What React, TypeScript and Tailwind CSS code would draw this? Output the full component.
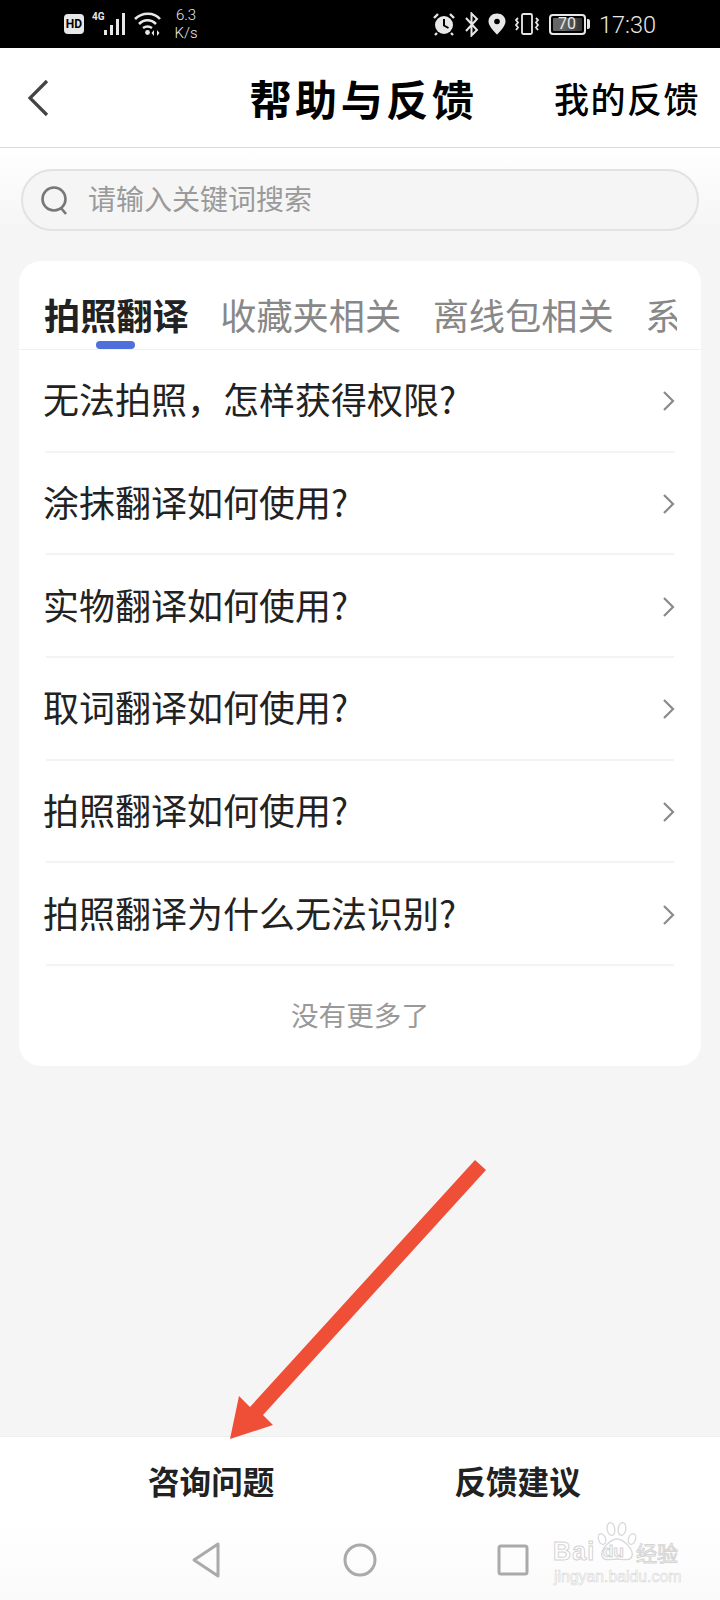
import React from 'react';

const rows = [
  '无法拍照，怎样获得权限?',
  '涂抹翻译如何使用?',
  '实物翻译如何使用?',
  '取词翻译如何使用?',
  '拍照翻译如何使用?',
  '拍照翻译为什么无法识别?',
];

const tabs = ['收藏夹相关', '离线包相关'];

function StatusBar() {
  return (
    <div className="flex h-12 items-center bg-black pl-16 text-[#e8e8e8] font-['Roboto',sans-serif]">
      {/* left cluster */}
      <div className="flex h-5 w-5 items-center justify-center rounded-[4px] bg-[#e8e8e8] text-[12px] font-bold text-black">HD</div>
      <div className="relative ml-2 h-6 w-[35px]">
        <span className="absolute left-0 top-[-1px] text-[10px] font-bold leading-3">4G</span>
        <svg width="24" height="24" viewBox="0 0 24 24" className="absolute left-[11px] top-0" fill="#e8e8e8">
          <rect x="1" y="18" width="3" height="5" />
          <rect x="7" y="13" width="3" height="10" />
          <rect x="13" y="7" width="3" height="16" />
          <rect x="19" y="1" width="3" height="22" />
        </svg>
      </div>
      <svg width="28" height="24" viewBox="0 0 28 24" className="ml-[7px]" fill="none" stroke="#e8e8e8" strokeWidth="2.6">
        <path d="M1 7 C8 0 20 0 26 7" />
        <path d="M5 12 C10 7 17 7 22 12" />
        <path d="M9 16 C12 14 15 14 18 16" />
        <circle cx="13.5" cy="20.5" r="2.4" fill="#e8e8e8" stroke="none" />
        <path d="M20 18 L17.5 21 L20 24 Z M23 18 L25.5 21 L23 24 Z" fill="#e8e8e8" stroke="none" />
      </svg>
      <div className="ml-[11px] flex w-[26px] flex-col items-center text-[15px] leading-[18px] font-light">
        <span>6.3</span>
        <span>K/s</span>
      </div>

      {/* right cluster */}
      <svg width="24" height="24" viewBox="0 0 24 24" className="ml-[233px]">
        <circle cx="12" cy="13" r="9" fill="#e8e8e8" />
        <path d="M12 7 V13.5 L16.5 16" fill="none" stroke="#000" strokeWidth="2" />
        <path d="M2 6 L6 2 M22 6 L18 2 M5 21 L3 23 M19 21 L21 23" stroke="#e8e8e8" strokeWidth="2.4" />
      </svg>
      <svg width="15" height="25" viewBox="0 0 15 25" className="ml-2" fill="none" stroke="#e8e8e8" strokeWidth="2">
        <path d="M2 6 L13 18 L7.5 23.5 V1.5 L13 7 L2 19" />
      </svg>
      <svg width="18" height="22" viewBox="0 0 18 22" className="ml-[9px]">
        <path d="M9 0.5 C4 0.5 0.5 4 0.5 8.5 C0.5 14 9 21.5 9 21.5 C9 21.5 17.5 14 17.5 8.5 C17.5 4 14 0.5 9 0.5 Z" fill="#e8e8e8" />
        <circle cx="9" cy="8.5" r="2.8" fill="#000" />
      </svg>
      <svg width="26" height="22" viewBox="0 0 26 22" className="ml-2" fill="none" stroke="#e8e8e8" strokeWidth="1.8">
        <rect x="8" y="1" width="10" height="20" rx="1.5" />
        <path d="M4 5 L2 7 L4 9.5 L2 12 L4 14.5 L2 17 M22 5 L24 7 L22 9.5 L24 12 L22 14.5 L24 17" />
      </svg>
      <div className="ml-[9px] flex items-center">
        <div className="flex h-[21px] w-[37px] items-center rounded-[4px] border-2 border-[#e8e8e8] p-[2px]">
          <div className="flex h-full w-full items-center justify-end rounded-[1px] bg-[linear-gradient(90deg,#666_0%,#666_35%,#333_100%)] pr-[6px] text-[16px] leading-none">70</div>
        </div>
        <div className="ml-[1px] h-[10px] w-[3px] rounded-r-[2px] bg-[#e8e8e8]" />
      </div>
      <span className="ml-[9px] mt-[3px] text-[23.5px] font-light leading-none">17:30</span>
    </div>
  );
}

function Header() {
  return (
    <div className="flex h-[100px] items-center border-b border-[#dcdcdc] bg-white text-black">
      <div className="flex flex-1 items-center pl-[27px]">
        <svg width="22" height="38" viewBox="0 0 22 38" fill="none" stroke="#444" strokeWidth="3.2">
          <path d="M20 2 L3 19 L20 36" />
        </svg>
      </div>
      <h1 className="text-[42px] font-bold leading-[50px] tracking-[3.6px]">帮助与反馈</h1>
      <div className="flex flex-1 justify-end pr-[20px] text-[35px] font-medium leading-[44px] tracking-[1.5px]">我的反馈</div>
    </div>
  );
}

function SearchBar() {
  return (
    <div className="flex h-[62px] items-center rounded-full border-2 border-[#e2e2e2] bg-[#f5f5f5] pl-[17px]">
      <svg width="28" height="30" viewBox="0 0 28 30" fill="none" stroke="#777" strokeWidth="2.6">
        <circle cx="14" cy="14" r="11.5" />
        <path d="M21 23 L26 29" />
      </svg>
      <span className="mb-[4px] ml-[20px] text-[28px] leading-[36px] text-[#9a9a9a]">请输入关键词搜索</span>
    </div>
  );
}

function FaqRow({ label }: { label: string }) {
  return (
    <div className="flex h-[102.67px] items-center justify-between border-b-2 border-[#f3f3f3]">
      <span className="mb-[4px] ml-[-3px] text-[36px] leading-[48px] text-[#222]">{label}</span>
      <svg width="13" height="22" viewBox="0 0 13 22" fill="none" stroke="#8a8a8a" strokeWidth="2.2" className="mr-[-1px] mt-[2px]">
        <path d="M2 2 L11 11 L2 20" />
      </svg>
    </div>
  );
}

function HelpCard() {
  return (
    <div className="mt-[30px] w-[682px] rounded-[22px] bg-white">
      <div className="flex h-[89px] items-start gap-[31.5px] border-b border-[#f0f0f0] pl-[25px] pt-[31px]">
        <div className="relative h-[57px] shrink-0">
          <span className="text-[36.2px] font-bold leading-[44px] text-[#222]">拍照翻译</span>
          <div className="absolute bottom-0 left-[52px] h-2 w-[39px] rounded-full bg-[#4f6fdc]" />
        </div>
        {tabs.map(t => (
          <span key={t} className="shrink-0 text-[36.2px] leading-[44px] text-[#888]">{t}</span>
        ))}
        {/* next tab is scrolled, only its first character shows */}
        <span className="w-[32px] shrink-0 overflow-hidden text-[36.2px] leading-[44px] text-[#888]">系</span>
      </div>
      <div className="px-[27px]">
        {rows.map(r => (
          <FaqRow key={r} label={r} />
        ))}
      </div>
      <div className="flex h-[100px] items-center justify-center pb-[4px] text-[27.6px] leading-[36px] text-[#999]">没有更多了</div>
    </div>
  );
}

function BottomBar() {
  return (
    <div className="border-t border-[#eeeeee] bg-white">
      <div className="flex h-[83px] items-center gap-[180px] pl-[148px] pt-[2px] text-[31.6px] font-bold leading-[40px] text-[#222]">
        <span>咨询问题</span>
        <span>反馈建议</span>
      </div>
      <div className="relative flex h-[80px] items-center bg-[linear-gradient(180deg,#ffffff,#fafafa)] pl-[191px]">
        <svg width="30" height="36" viewBox="0 0 30 36" fill="none" stroke="#aaa" strokeWidth="3" strokeLinejoin="round">
          <path d="M27 2 V34 L3 18 Z" />
        </svg>
        <svg width="34" height="34" viewBox="0 0 34 34" fill="none" stroke="#aaa" strokeWidth="3" className="ml-[122px]">
          <circle cx="17" cy="17" r="15" />
        </svg>
        <svg width="32" height="32" viewBox="0 0 32 32" fill="none" stroke="#aaa" strokeWidth="3" className="ml-[120px]">
          <rect x="2" y="2" width="28" height="28" rx="2" />
        </svg>
        {/* baidu watermark sits over the nav bar */}
        <div className="absolute left-[553px] top-0 h-[80px] w-[130px] text-white [-webkit-text-stroke:1px_#d4d4d4]">
          <svg width="42" height="42" viewBox="0 0 42 42" className="absolute left-[43px] top-[1px]" fill="#fff" stroke="#d8d8d8" strokeWidth="1.3">
            <ellipse cx="6" cy="18" rx="3.5" ry="5.5" transform="rotate(-20 6 18)" />
            <ellipse cx="15" cy="8" rx="3.8" ry="6.5" transform="rotate(-8 15 8)" />
            <ellipse cx="26" cy="8" rx="3.8" ry="6.5" transform="rotate(8 26 8)" />
            <ellipse cx="36" cy="18" rx="3.5" ry="5.5" transform="rotate(20 36 18)" />
            <path d="M21 18 C27 18 38 28 36 35 C34 41 26 38 21 38 C16 38 8 41 6 35 C4 28 15 18 21 18 Z" />
          </svg>
          <span className="absolute left-0 top-[19px] font-['Liberation_Sans',sans-serif] text-[25px] font-bold leading-none tracking-[1.2px]">Bai</span>
          <span className="absolute left-[50px] top-[23px] font-['Liberation_Sans',sans-serif] text-[17px] font-bold leading-none">du</span>
          <span className="absolute left-[83px] top-[18px] text-[21px] leading-[28px]">经验</span>
          <span className="absolute left-[1px] top-[49px] font-['Liberation_Sans',sans-serif] text-[15.8px] leading-none [-webkit-text-stroke:0.6px_#d8d8d8]">jingyan.baidu.com</span>
        </div>
      </div>
    </div>
  );
}

export default function App() {
  return (
    <div className="relative flex h-[1600px] w-[720px] flex-col overflow-hidden bg-[#f5f5f5] font-['Noto_Sans_CJK_SC','Noto_Sans',sans-serif]">
      <StatusBar />
      <Header />
      <div className="flex-1 bg-[linear-gradient(180deg,#ffffff_0px,#f5f5f5_82px)] pl-[19px] pt-[21px]">
        <div className="ml-[2px] w-[678px]">
          <SearchBar />
        </div>
        <HelpCard />
      </div>
      <BottomBar />

      {/* red annotation arrow drawn over the screenshot */}
      <svg width="720" height="1600" viewBox="0 0 720 1600" className="pointer-events-none absolute left-0 top-0">
        <path d="M475 1160 L486 1170 L263 1415 L273 1425 L230 1439 L239 1396 L250 1407 Z" fill="#ef4f37" />
      </svg>
    </div>
  );
}
